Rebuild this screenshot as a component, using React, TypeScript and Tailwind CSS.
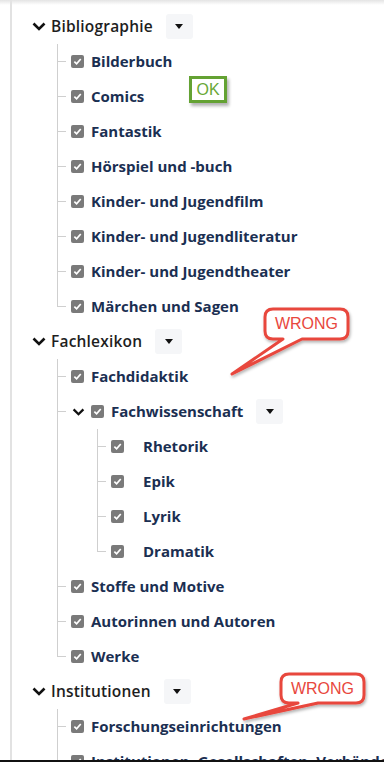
import React from "react";

type Node = { label: string; children?: Node[] };

const tree: Node[] = [
  {
    label: "Bibliographie",
    children: [
      { label: "Bilderbuch" },
      { label: "Comics" },
      { label: "Fantastik" },
      { label: "Hörspiel und -buch" },
      { label: "Kinder- und Jugendfilm" },
      { label: "Kinder- und Jugendliteratur" },
      { label: "Kinder- und Jugendtheater" },
      { label: "Märchen und Sagen" },
    ],
  },
  {
    label: "Fachlexikon",
    children: [
      { label: "Fachdidaktik" },
      {
        label: "Fachwissenschaft",
        children: [
          { label: "Rhetorik" },
          { label: "Epik" },
          { label: "Lyrik" },
          { label: "Dramatik" },
        ],
      },
      { label: "Stoffe und Motive" },
      { label: "Autorinnen und Autoren" },
      { label: "Werke" },
    ],
  },
  {
    label: "Institutionen",
    children: [
      { label: "Forschungseinrichtungen" },
      { label: "Institutionen, Gesellschaften, Verbände" },
      { label: "Archive und Bibliotheken" },
    ],
  },
];

function Chevron({ className }: { className?: string }) {
  return (
    <svg viewBox="0 0 14 9" className={className} fill="none">
      <path d="M1.5 1.5 L7 7 L12.5 1.5" stroke="#111" strokeWidth="2.6" />
    </svg>
  );
}

function Check() {
  return (
    <span className="flex h-[13px] w-[13px] shrink-0 items-center justify-center rounded-[2px] bg-[#7a7a7a]">
      <svg viewBox="0 0 10 10" className="h-[9px] w-[9px]" fill="none">
        <path d="M1.5 5.2 L4 7.6 L8.6 2.2" stroke="#fff" strokeWidth="1.9" />
      </svg>
    </span>
  );
}

function Caret({ className }: { className?: string }) {
  return (
    <button
      className={
        "flex h-[25px] w-[27px] items-center justify-center rounded-[3px] bg-[#f5f6f8] " +
        (className ?? "")
      }
    >
      <svg viewBox="0 0 8 5" className="h-[5px] w-[8px]">
        <path d="M0 0 H8 L4 5 Z" fill="#111" />
      </svg>
    </button>
  );
}

function Branch({ last, children }: { last: boolean; children: React.ReactNode }) {
  return (
    <div className="relative">
      <span
        className={
          "absolute left-0 top-0 w-px bg-[#cfcfcf] " + (last ? "h-[18px]" : "h-full")
        }
      />
      <span className="absolute left-0 top-[17px] h-px w-[9px] bg-[#cfcfcf]" />
      {children}
    </div>
  );
}

function Leaf({ label, deep }: { label: string; deep?: boolean }) {
  return (
    <div className="flex h-[35px] items-center whitespace-nowrap pl-[14px]">
      <Check />
      <span
        className={
          "text-[15px] font-bold text-[#1b2f52] " + (deep ? "ml-[19px]" : "ml-[7px]")
        }
      >
        {label}
      </span>
    </div>
  );
}

function Callout({ id, d, box }: { id: string; d: string; box: string }) {
  return (
    <>
      <svg className="pointer-events-none absolute left-0 top-0 h-[762px] w-[384px]">
        <defs>
          <filter id={id} x="-20%" y="-20%" width="140%" height="160%">
            <feDropShadow dx="1" dy="2" stdDeviation="1.5" floodColor="#000" floodOpacity="0.3" />
          </filter>
        </defs>
        <path
          d={d}
          fill="#fff"
          stroke="#e8473d"
          strokeWidth="3"
          strokeLinejoin="round"
          filter={"url(#" + id + ")"}
        />
      </svg>
      <div
        className={
          "pointer-events-none absolute flex items-center justify-center font-['Liberation_Sans',sans-serif] text-[16px] font-light text-[#e8473d] " +
          box
        }
      >
        WRONG
      </div>
    </>
  );
}

export default function App() {
  return (
    <div className="relative h-[762px] w-[384px] overflow-hidden bg-white font-['Open_Sans',sans-serif]">
      <div className="flex h-full">
        <div className="w-[10px] shrink-0" />
        <div className="h-full w-[2px] shrink-0 bg-[#e2e2e2]" />
        <div className="flex-1 pl-[20px] pt-[9px]">
          {tree.map((group) => (
            <div key={group.label}>
              <div className="flex h-[35px] items-center whitespace-nowrap">
                <Chevron className="h-[9px] w-[14px] shrink-0" />
                <span className="ml-[5px] text-[15.5px] font-semibold tracking-[0.2px] text-[#1e1e1e]">
                  {group.label}
                </span>
                <Caret className="ml-[13px]" />
              </div>
              <div className="ml-[25px]">
                {group.children?.map((item, i) => (
                  <Branch key={item.label} last={i === group.children!.length - 1}>
                    {item.children ? (
                      <>
                        <div className="flex h-[35px] items-center whitespace-nowrap pl-[15px]">
                          <Chevron className="h-[8px] w-[13px] shrink-0" />
                          <span className="ml-[6px]">
                            <Check />
                          </span>
                          <span className="ml-[7px] text-[15px] font-bold text-[#1b2f52]">
                            {item.label}
                          </span>
                          <Caret className="ml-[13px]" />
                        </div>
                        <div className="ml-[40px]">
                          {item.children.map((sub, j) => (
                            <Branch key={sub.label} last={j === item.children!.length - 1}>
                              <Leaf label={sub.label} deep />
                            </Branch>
                          ))}
                        </div>
                      </>
                    ) : (
                      <Leaf label={item.label} />
                    )}
                  </Branch>
                ))}
              </div>
            </div>
          ))}
        </div>
      </div>

      <div className="pointer-events-none absolute left-0 right-0 top-0 h-[5px] bg-linear-to-b from-[#e4e4e4] to-white/0" />

      <div className="pointer-events-none absolute left-[189px] top-[76px] flex h-[27px] w-[38px] items-center justify-center border-[3px] border-[#64a233] bg-white font-['Liberation_Sans',sans-serif] text-[16px] text-[#6aa836] shadow-[2px_3px_3px_rgba(0,0,0,0.3)]">
        OK
      </div>

      <Callout
        id="sh1"
        d="M273 309 H340 Q348 309 348 317 V331 Q348 339 340 339 H302 L232 374 L283 339 H273 Q265 339 265 331 V317 Q265 309 273 309 Z"
        box="left-[265px] top-[309px] h-[30px] w-[83px]"
      />
      <Callout
        id="sh2"
        d="M289 674 H356 Q364 674 364 682 V695 Q364 703 356 703 H318 L244 719 L298 703 H289 Q281 703 281 695 V682 Q281 674 289 674 Z"
        box="left-[281px] top-[674px] h-[29px] w-[83px]"
      />

      <div className="absolute bottom-0 left-0 right-0 h-[2px] bg-[#111]" />
    </div>
  );
}
